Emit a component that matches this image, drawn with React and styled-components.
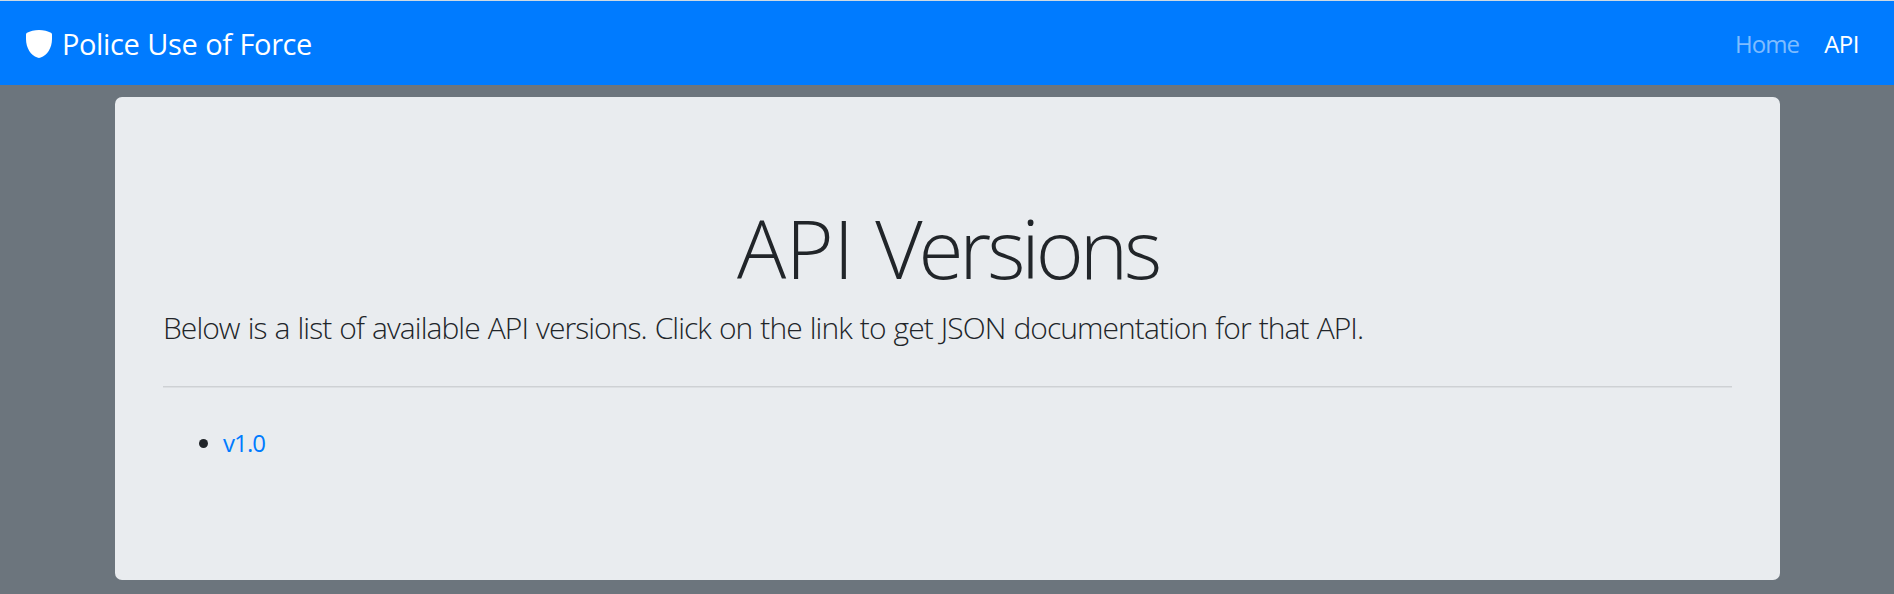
import React from "react";
import styled, { createGlobalStyle } from "styled-components";

const GlobalStyle = createGlobalStyle`
  *, *::before, *::after { box-sizing: border-box; }
  body {
    margin: 0;
    background: #6c757d;
    color: #212529;
    font-family: "Segoe UI", "Open Sans", "Noto Sans", sans-serif;
    font-size: 24px;
    line-height: 36px;
    overflow: hidden;
  }
`;

const Navbar = styled.nav`
  display: flex;
  align-items: center;
  justify-content: space-between;
  height: 85px;
  padding: 0 35px 0 24px;
  border-top: 1px solid #ced9e3;
  background: #007bff;
`;

const Brand = styled.a`
  display: flex;
  align-items: center;
  color: #fff;
  font-size: 29px;
  line-height: 45px;
  letter-spacing: -0.4px;
  word-spacing: 0.8px;
  white-space: nowrap;
  text-decoration: none;
`;

const Shield = styled.svg`
  width: 30px;
  height: 30px;
  margin: 2px 8px 0 0;
  fill: #fff;
`;

const NavLinks = styled.div`
  display: flex;
  gap: 25px;
  padding-top: 2px;
`;

const NavLink = styled.a`
  color: ${({ $active }) => ($active ? "#fff" : "rgba(255, 255, 255, 0.5)")};
  letter-spacing: ${({ $active }) => ($active ? "-0.5px" : "-0.9px")};
  text-decoration: none;
`;

const Jumbotron = styled.main`
  width: 1665px;
  height: 483px;
  margin: 12px 0 0 115px;
  padding: 96px 48px;
  border-radius: 7px;
  background: #e9ecef;
`;

const Title = styled.h1`
  margin: 0 0 4px;
  font-size: 82px;
  font-weight: 300;
  line-height: 108px;
  text-align: center;
`;

const TitleWord = styled.span`
  letter-spacing: ${({ $tracking }) => $tracking};
`;

const Lead = styled.p`
  margin: 0;
  font-size: 30px;
  font-weight: 300;
  line-height: 45px;
  letter-spacing: -0.95px;
  word-spacing: 1.2px;
  white-space: nowrap;
`;

const Divider = styled.hr`
  height: 2px;
  margin: 36px 0 37px;
  border: 0;
  border-top: 1px solid #ced1d4;
  background: #dcdfe2;
`;

const VersionList = styled.ul`
  margin: 0;
  padding-left: 60px;
`;

const VersionLink = styled.a`
  color: #007bff;
  letter-spacing: -0.9px;
  text-decoration: none;
`;

export default function App() {
  return (
    <>
      <GlobalStyle />
      <Navbar>
        <Brand>
          <Shield viewBox="0 0 30 30">
            <path d="M15 1C19.5 1 24 2.2 27 3.8Q28 4.3 28 5.5V10C28 19 23 26.5 16.7 28.6Q15 29.3 13.3 28.6C7 26.5 2 19 2 10V5.5Q2 4.3 3 3.8C6 2.2 10.5 1 15 1Z" />
          </Shield>
          Police Use of Force
        </Brand>
        <NavLinks>
          <NavLink>Home</NavLink>
          <NavLink $active>API</NavLink>
        </NavLinks>
      </Navbar>
      <Jumbotron>
        <Title>
          <TitleWord $tracking="-0.3px">API</TitleWord>{" "}
          <TitleWord $tracking="-4.1px">Versions</TitleWord>
        </Title>
        <Lead>
          Below is a list of available API versions. Click on the link to get JSON documentation for that API.
        </Lead>
        <Divider />
        <VersionList>
          <li>
            <VersionLink>v1.0</VersionLink>
          </li>
        </VersionList>
      </Jumbotron>
    </>
  );
}
